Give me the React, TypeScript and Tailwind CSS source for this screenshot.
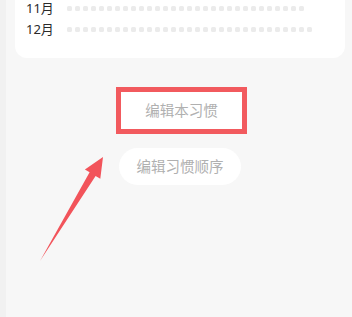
import React from 'react';

const font = { fontFamily: '"Noto Sans", "Noto Sans CJK SC", sans-serif' };

const rows = [
  { label: '11月', dots: 30 },
  { label: '12月', dots: 31 },
];

export default function App() {
  return (
    <div className="relative w-full h-[317px] bg-[#f7f7f7] overflow-hidden flex" style={font}>
      {/* left edge strip */}
      <div className="w-[6px] h-full bg-[#f1f1f1]" />

      <div className="flex-1 pl-[9px] pr-[7px] flex flex-col items-center">
        {/* calendar card (top cut off) */}
        <div className="w-full bg-white rounded-b-[12px] pl-[11px] pb-[21px] flex flex-col gap-[5px]">
          {rows.map((r) => (
            <div key={r.label} className="flex items-center h-[16px]">
              <span className="w-[41px] text-[13px] leading-[16px] text-[#2a2a2a]">{r.label}</span>
              <div className="flex gap-[3px]">
                {Array.from({ length: r.dots }).map((_, i) => (
                  <span key={i} className="w-[5px] h-[5px] rounded-[1.5px] bg-[#ebebeb]" />
                ))}
              </div>
            </div>
          ))}
        </div>

        {/* highlighted button */}
        <div className="mt-[29px] ml-[3px] border-[5px] border-[#f25a5e] bg-white">
          <div className="w-[121px] h-[37px] rounded-full bg-white flex items-center justify-center text-[14.5px] text-[#b0b0b0]">
            编辑本习惯
          </div>
        </div>

        <div className="mt-[14px] w-[122px] h-[37px] rounded-full bg-white flex items-center justify-center text-[14.5px] text-[#b0b0b0]">
          编辑习惯顺序
        </div>
      </div>

      {/* annotation arrow */}
      <svg className="absolute left-0 top-0 w-[352px] h-[317px] pointer-events-none" viewBox="0 0 352 317">
        <polygon
          points="40,261 95.6,176 100.3,178.8 103,157 84.9,169.4 89.6,172.3"
          fill="#f2545b"
        />
      </svg>
    </div>
  );
}
